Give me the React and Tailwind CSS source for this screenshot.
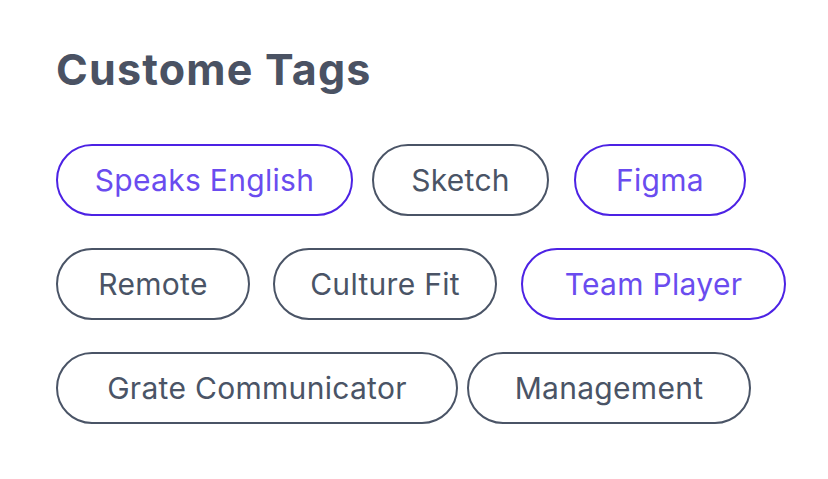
export default function App() {
  const font = { fontFamily: "Inter, 'Noto Sans', sans-serif" };
  const purple = "border-[#4c22e4] text-[#6a4cef]";
  const gray = "border-[#4a5466] text-[#4a5466]";
  const base =
    "flex h-[72px] shrink-0 items-center justify-center rounded-full border-2 bg-white text-[30px] leading-none tracking-[0.3px]";
  return (
    <div className="h-[479px] w-[828px] bg-white pl-[56px] pt-[48px]" style={font}>
      <h1 className="text-[43px] font-bold leading-none tracking-[1.2px] text-[#4a5263]">
        Custome Tags
      </h1>
      <div className="mt-[53px] flex flex-col gap-[32px]">
        <div className="flex">
          <div className={`${base} ${purple} w-[297px]`}>Speaks English</div>
          <div className={`${base} ${gray} ml-[19px] w-[177px]`}>Sketch</div>
          <div className={`${base} ${purple} ml-[25px] w-[172px]`}>Figma</div>
        </div>
        <div className="flex">
          <div className={`${base} ${gray} w-[194px]`}>Remote</div>
          <div className={`${base} ${gray} ml-[23px] w-[224px]`}>Culture Fit</div>
          <div className={`${base} ${purple} ml-[24px] w-[265px]`}>Team Player</div>
        </div>
        <div className="flex">
          <div className={`${base} ${gray} w-[402px]`}>Grate Communicator</div>
          <div className={`${base} ${gray} ml-[9px] w-[284px]`}>Management</div>
        </div>
      </div>
    </div>
  );
}
